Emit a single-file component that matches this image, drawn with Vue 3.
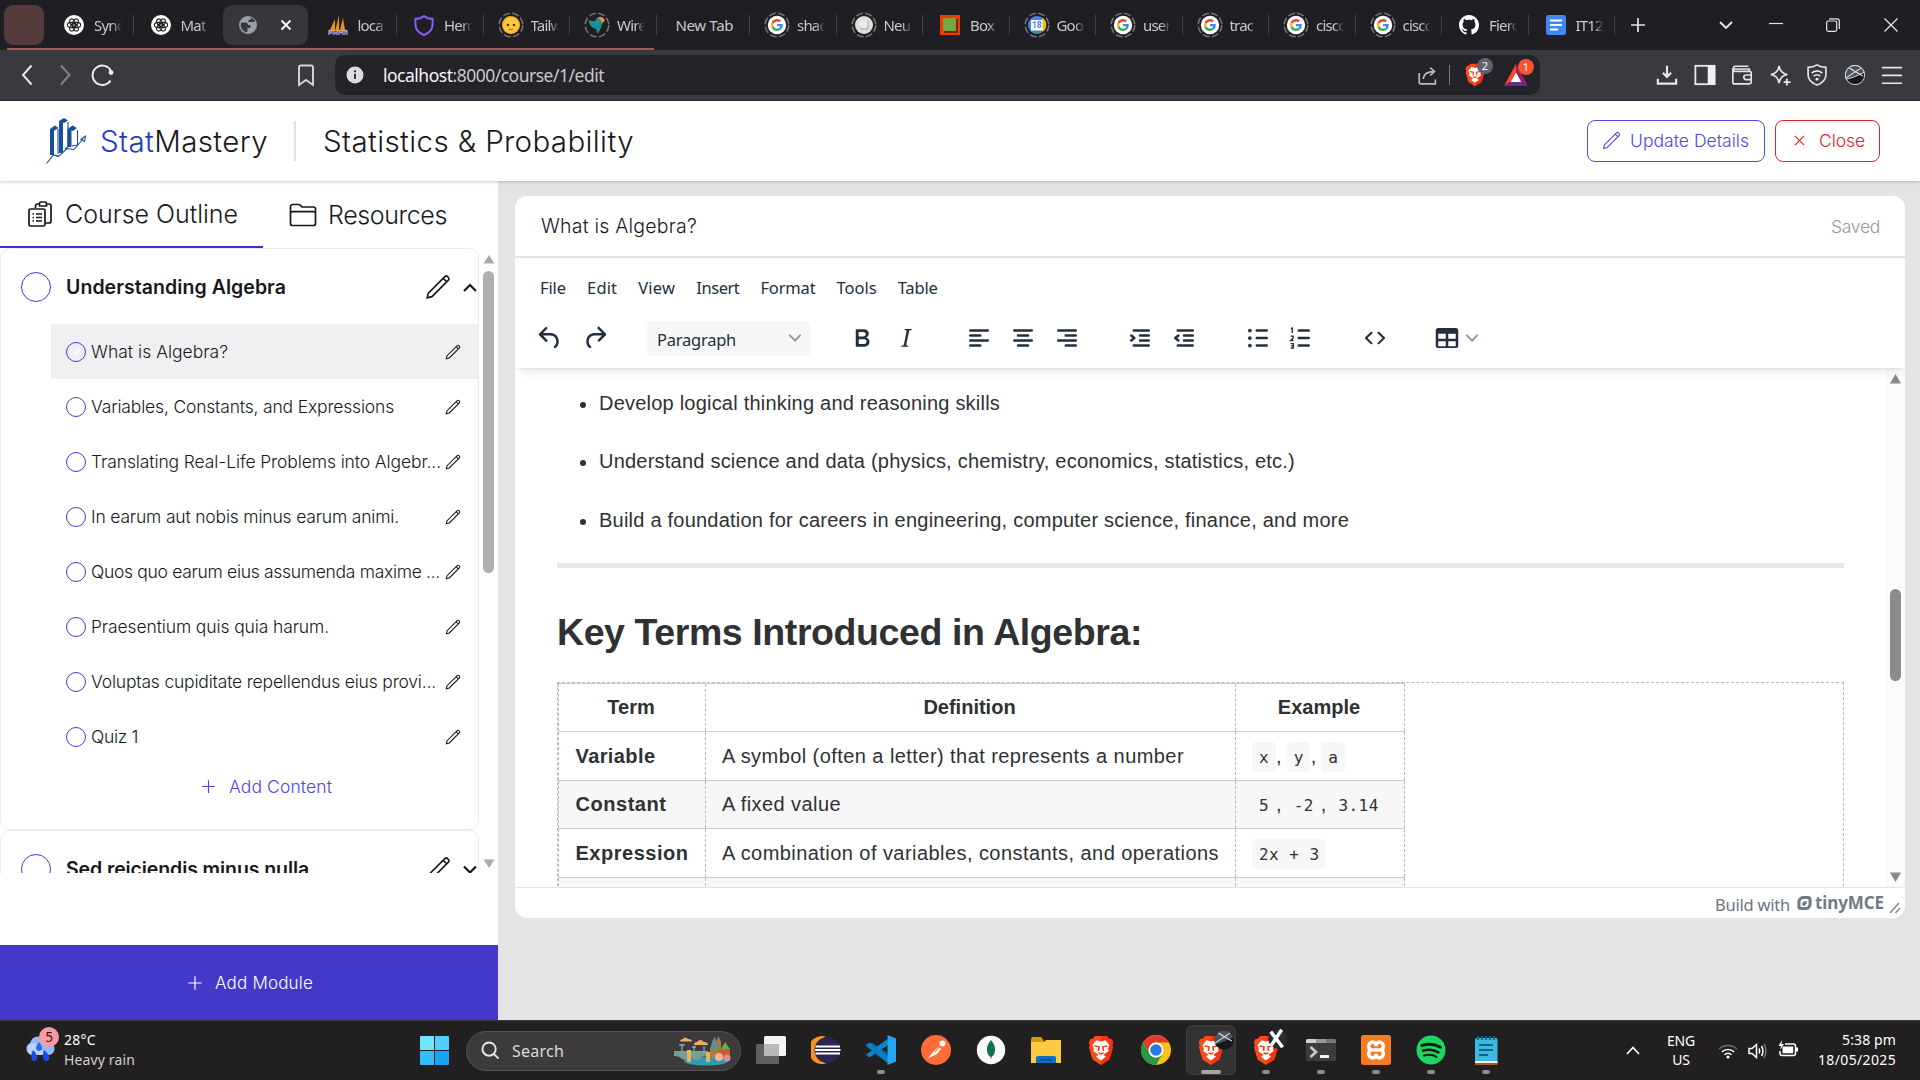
<script setup>
// Tracks a label out or in so that it fills the given width in pixels.
const vFit = {
  mounted(el, { value }) {
    const range = document.createRange()
    range.selectNodeContents(el)
    const natural = range.getBoundingClientRect().width
    const count = el.textContent.length
    if (value && count) el.style.letterSpacing = `${((value - natural) / count).toFixed(3)}px`
  },
}

const googleG =
  '<path fill="#EA4335" d="M24 9.5c3.54 0 6.71 1.22 9.21 3.6l6.85-6.85C35.9 2.38 30.47 0 24 0 14.62 0 6.51 5.38 2.56 13.22l7.98 6.19C12.43 13.72 17.74 9.5 24 9.5z"/><path fill="#4285F4" d="M46.98 24.55c0-1.57-.15-3.09-.38-4.55H24v9.02h12.94c-.58 2.96-2.26 5.48-4.78 7.18l7.73 6c4.51-4.18 7.09-10.36 7.09-17.65z"/><path fill="#FBBC05" d="M10.53 28.59c-.48-1.45-.76-2.99-.76-4.59s.27-3.14.76-4.59l-7.98-6.19C.92 16.46 0 20.12 0 24c0 3.88.92 7.54 2.56 10.78l7.97-6.19z"/><path fill="#34A853" d="M24 48c6.48 0 11.93-2.13 15.89-5.81l-7.73-6c-2.15 1.45-4.92 2.3-8.16 2.3-6.26 0-11.57-4.22-13.47-9.91l-7.98 6.19C6.51 42.62 14.62 48 24 48z"/>'
const ring = '<circle cx="15" cy="15" r="11.8" fill="none" stroke="#77777b" stroke-width="1.5" stroke-dasharray="7 2.4" />'

// Favicons, all on a 30 by 30 board
const fav = {
  gpt: '<circle cx="15" cy="15" r="10" fill="#fff"/><g fill="none" stroke="#222" stroke-width="1.1"><ellipse cx="15" cy="12.4" rx="2.6" ry="4" transform="rotate(30 15 15)"/><ellipse cx="15" cy="12.4" rx="2.6" ry="4" transform="rotate(90 15 15)"/><ellipse cx="15" cy="12.4" rx="2.6" ry="4" transform="rotate(150 15 15)"/><ellipse cx="15" cy="12.4" rx="2.6" ry="4" transform="rotate(210 15 15)"/><ellipse cx="15" cy="12.4" rx="2.6" ry="4" transform="rotate(270 15 15)"/><ellipse cx="15" cy="12.4" rx="2.6" ry="4" transform="rotate(330 15 15)"/></g>',
  globe: '<circle cx="15" cy="15" r="9" fill="#9aa0a6"/><path d="M8 12.500h4.500c1.500 0 2.500 1 2.500 2.500h2.500v3h-3v3.500l-1.500.8A8 8 0 0 1 8 12.500z" fill="#37363c"/><path d="M17.500 7.800v2.200h-2v2h5.500l1-1a8 8 0 0 0-4.500-3.200z" fill="#37363c"/>',
  pma: '<path d="M7 20 12 9v11zM12.500 20 16 5v15zM17 20l3-12 2 12z" fill="#f29111"/><path d="M6 20.500h18" stroke="#e8a33a" stroke-width="1.500"/><path d="M6 25v-4h3v2H6M11 25v-4M14 25v-4M11 23h3M16 25v-4l2 2 2-2v4M22 25v-4h2v4" fill="none" stroke="#9ea3e6" stroke-width="1.300"/>',
  shield: '<path d="M15 6c2.500 2 5.500 3 8.500 3v6c0 4.500-3 7.800-8.500 10-5.500-2.200-8.500-5.500-8.500-10V9C9.500 9 12.500 8 15 6z" fill="none" stroke="#8b5cf6" stroke-width="2"/>',
  tail: ring + '<circle cx="15" cy="15" r="9" fill="#fbb92c"/><circle cx="15" cy="15" r="7" fill="#fdcb3a"/><circle cx="12" cy="15" r="1.300" fill="#4a2b12"/><circle cx="18" cy="15" r="1.300" fill="#4a2b12"/><path d="M13 19q2 1.500 4 0" stroke="#c55" fill="none" stroke-width="1.200"/>',
  wire: ring + '<path d="M6.500 10l6 1.500L15 8c3-2.500 7-1 7.500 2.500L19.500 15c0 4-2 5-4 9l-1.500-5c-4-1-7-4-7.500-9z" fill="#1e8f93"/><path d="M15.500 8c2-2 6.500-1.500 7.500 3l-3 2c-.5-2.500-2-4-4.500-5z" fill="#f28b3a"/>',
  google: ring + '<circle cx="15" cy="15" r="9.200" fill="#fff"/><svg x="9" y="9" width="12" height="12" viewBox="0 0 48 48">' + googleG + '</svg>',
  neu: ring + '<circle cx="15" cy="15" r="9" fill="#dedede"/><rect x="11" y="11" width="9" height="9" rx="2" fill="#c4c4c4"/><rect x="10.500" y="10.500" width="7.500" height="7.500" rx="2" fill="#ebebeb"/>',
  box: '<rect x="5" y="5" width="20" height="20" fill="#f03c02"/><rect x="9" y="9" width="14" height="14" fill="#7a2a08"/><rect x="8" y="8" width="13" height="13" fill="#7aa840"/>',
  cal: ring + '<circle cx="15" cy="15" r="9" fill="#4285f4"/><path d="M20 8v13h2a9 9 0 0 0 0-12z" fill="#fbbc04"/><path d="M9 20.500h12a9 9 0 0 1-12 0z" fill="#34a853"/><rect x="9" y="10" width="11.500" height="10.500" fill="#fff"/><text x="14.800" y="18.200" font-size="8.500" font-weight="700" text-anchor="middle" fill="#4285f4" font-family="Roboto, sans-serif">18</text>',
  github: '<path transform="translate(5 5) scale(1.25)" fill="#fff" d="M8 0C3.580 0 0 3.580 0 8c0 3.540 2.290 6.530 5.470 7.590.4.070.55-.17.55-.38 0-.19-.01-.82-.01-1.490-2.010.37-2.530-.49-2.690-.94-.09-.23-.48-.94-.82-1.130-.28-.15-.68-.52-.01-.53.63-.01 1.080.58 1.230.82.72 1.210 1.870.87 2.330.66.07-.52.28-.87.51-1.070-1.780-.2-3.640-.89-3.640-3.950 0-.87.31-1.590.82-2.150-.08-.2-.36-1.020.08-2.120 0 0 .67-.21 2.200.82.64-.18 1.320-.27 2-.27s1.360.09 2 .27c1.530-1.040 2.200-.82 2.200-.82.44 1.100.16 1.920.08 2.120.51.56.82 1.270.82 2.150 0 3.070-1.870 3.750-3.650 3.950.29.25.54.73.54 1.480 0 1.070-.01 1.930-.01 2.200 0 .21.15.46.55.38A8.010 8.010 0 0 0 16 8c0-4.420-3.580-8-8-8z"/>',
  docs: '<rect x="5" y="5" width="20" height="20" rx="2.500" fill="#4285f4"/><path d="M9 10.500h12M9 15h12M9 19.500h8" stroke="#fff" stroke-width="2.200"/>',
}

const tabs = [
  { icon: 'gpt', title: 'Sync', sep: true },
  { icon: 'gpt', title: 'Mat' },
  { icon: 'globe', title: '', active: true },
  { icon: 'pma', title: 'loca', sep: true },
  { icon: 'shield', title: 'Herc', sep: true },
  { icon: 'tail', title: 'Tailw', sep: true },
  { icon: 'wire', title: 'Wire', sep: true },
  { title: 'New Tab', sep: true },
  { icon: 'google', title: 'shad', sep: true },
  { icon: 'neu', title: 'Neu', sep: true },
  { icon: 'box', title: 'Box', sep: true },
  { icon: 'cal', title: 'Goo', sep: true },
  { icon: 'google', title: 'user', sep: true },
  { icon: 'google', title: 'trac', sep: true },
  { icon: 'google', title: 'cisco', sep: true },
  { icon: 'google', title: 'cisco', sep: true },
  { icon: 'github', title: 'Fierc', sep: true },
  { icon: 'docs', title: 'IT12', sep: true },
]

const lion =
  '<path d="M9 1h12l2.500 3 2-.3 1.800 4-1 2.300.7 2.500-3.500 12L15 30l-8.500-5.500L3 12.500l.7-2.500-1-2.300 1.800-4 2 .3z" fill="#fb4a1c"/><path d="M15 1h6l2.500 3 2-.3 1.800 4-1 2.300.7 2.500-3.500 12L15 30z" fill="#f51f0a" opacity=".55"/><path d="M15 6.500l4.500-1.200L23.500 10l-1.500 4 .8 2-5.300 3.800 2.500 2-5 3.700-5-3.700 2.500-2L7.200 16l.8-2L6.500 10l4-4.700z" fill="#fff"/><path d="M8.500 11l4.500.8-.5 4.200M21.500 11l-4.500.8.5 4.200M12.500 17.800l2.500 1.100 2.500-1.100" stroke="#fb3c1a" stroke-width="1.600" fill="none"/>'

const orb =
  '<circle cx="12" cy="12" r="10.500" fill="#14161a"/><path d="M1.700 10A10.500 10.500 0 0 1 22 9C16 12 9 15.500 2.500 16.500A10.500 10.500 0 0 1 1.700 10z" fill="#4b525d"/><path d="M2.500 15 18.500 4.500M6 4.500 20.500 13" stroke="#d6dbe2" stroke-width="1.300"/>'

const tools = [
  { d: '<path d="M12 2v12M7.500 9.500l4.500 4.500 4.500-4.500M2 16v5.500h20V16" stroke-width="2.400"/>' },
  { d: '<rect x="1.500" y="2" width="21" height="20" stroke-width="2"/><rect x="15" y="2" width="8" height="20" fill="#f0f0f2" stroke="none"/>' },
  { d: '<path d="M3 5.500h17V8M3 5.500C2.500 4 3 2.500 4.500 2.500H19M2 4.500v15c0 1.200.8 2.200 2.300 2.200h16c1 0 1.700-.7 1.700-1.700V9.500C22 8.500 21.300 8 20.500 8H4.500C3 8 2 7 2 5M22 12h-5.500a2.500 2.500 0 0 0 0 5H22" stroke-width="1.800"/>' },
  { d: '<path d="M11 2c.8 5.500 3 8.500 9 9.500-6 1-8.200 4-9 9.500-.8-5.500-3-8.500-9-9.500 6-1 8.200-4 9-9.500z" stroke-width="1.800"/><path d="M19.500 16v7.500M16 19.800h7.500" stroke-width="2"/>' },
  { d: '<path d="M12 1c3 2 6.500 2.700 9.700 2.700V12c0 5-4 8.800-9.700 11-5.700-2.200-9.700-6-9.700-11V3.700C5.500 3.700 9 3 12 1z" stroke-width="1.800"/><path d="M6.200 10a8 8 0 0 1 11.600 0M8.500 13.200a5 5 0 0 1 7 0" stroke-width="1.900"/><circle cx="12" cy="16.500" r="1.600" fill="#f0f0f2" stroke="none"/>' },
  { d: orb },
  { d: '<path d="M1 4h22M1 12.500h22M1 21h22" stroke-width="1.900"/>' },
]

const pencil =
  '<path d="M2 22l1.100-4.400L18.300 2.400a1.800 1.800 0 0 1 2.500 0l.8.8a1.800 1.800 0 0 1 0 2.500L6.400 20.900zM16.800 4l3.200 3.200" />'
const plus = '<path d="M10 1.500v17M1.500 10h17"/>'

const lessons = [
  { title: 'What is Algebra?', w: 137, active: true },
  { title: 'Variables, Constants, and Expressions', w: 303 },
  { title: 'Translating Real-Life Problems into Algebr...', w: 350 },
  { title: 'In earum aut nobis minus earum animi.', w: 308 },
  { title: 'Quos quo earum eius assumenda maxime ...', w: 349 },
  { title: 'Praesentium quis quia harum.', w: 238 },
  { title: 'Voluptas cupiditate repellendus eius provi...', w: 345 },
  { title: 'Quiz 1', w: 47 },
]

const menus = [
  ['File', 26], ['Edit', 30], ['View', 37], ['Insert', 43], ['Format', 55], ['Tools', 40], ['Table', 40],
]

const ed = {
  undo: '<path d="M6.400 8H12c3.700 0 6.200 2 6.800 5.100.6 2.700-.4 5.600-2.300 6.800a1 1 0 0 1-1-1.800c1.100-.6 1.800-2.700 1.400-4.600-.5-2.100-2.100-3.500-4.900-3.500H6.400l3.300 3.300a1 1 0 1 1-1.400 1.400l-5-5a1 1 0 0 1 0-1.400l5-5a1 1 0 0 1 1.400 1.400L6.400 8Z"/>',
  redo: '<path d="M17.600 10H12c-2.800 0-4.400 1.400-4.900 3.500-.4 2 .3 4 1.400 4.600a1 1 0 1 1-1 1.800c-2-1.200-2.900-4.100-2.300-6.800.6-3 3-5.100 6.800-5.100h5.600l-3.300-3.300a1 1 0 1 1 1.400-1.400l5 5a1 1 0 0 1 0 1.400l-5 5a1 1 0 0 1-1.400-1.400l3.300-3.300Z"/>',
  bold: '<path d="M7.800 19c-.3 0-.5 0-.6-.2l-.2-.5V5.700c0-.2 0-.4.2-.5l.6-.2h5c1.500 0 2.700.3 3.500 1 .7.600 1.100 1.400 1.100 2.500a3 3 0 0 1-.6 1.900c-.4.600-1 1-1.600 1.200.4.100.9.300 1.300.6s.8.700 1 1.200c.4.400.5 1 .5 1.600 0 1.300-.4 2.300-1.300 3-.8.700-2.100 1-3.800 1H7.800Zm5-8.300c.6 0 1.200-.1 1.600-.5.4-.3.600-.7.600-1.300 0-1.100-.8-1.700-2.300-1.700H9.300v3.500h3.400Zm.5 6c.7 0 1.300-.1 1.700-.4.4-.4.600-.9.600-1.500s-.2-1-.7-1.400c-.4-.3-1-.4-2-.4H9.400v3.800h4Z"/>',
  italic: '<path d="m16.700 4.700-.1.900h-.3c-.6 0-1 0-1.400.3-.3.300-.4.600-.5 1.100l-2.100 9.800v.6c0 .5.400.8 1.400.8h.2l-.2.800H8l.2-.8h.2c1.100 0 1.800-.5 2-1.500l2-9.800.1-.5c0-.6-.4-.8-1.400-.8h-.3l.2-.9h5.800Z"/>',
  left: '<path class="ln" d="M5 6h14M5 10h8M5 14h14M5 18h8"/>',
  center: '<path class="ln" d="M5 6h14M8 10h8M5 14h14M8 18h8"/>',
  right: '<path class="ln" d="M5 6h14M11 10h8M5 14h14M11 18h8"/>',
  indent: '<path class="ln" d="M7 6h12M12 10h7M12 14h7M7 18h12M5 10l2.500 2L5 14"/>',
  outdent: '<path class="ln" d="M7 6h12M12 10h7M12 14h7M7 18h12M7.500 10L5 12l2.500 2"/>',
  bullets: '<path class="ln" d="M11 6h8M11 12h8M11 18h8"/><circle cx="5.500" cy="6" r="1.500"/><circle cx="5.500" cy="12" r="1.500"/><circle cx="5.500" cy="18" r="1.500"/>',
  numbers: '<path class="ln" d="M11 6h8M11 12h8M11 18h8"/><path class="th" d="M4.800 4.500l1-.5v4M4.500 10.500h2v1.500l-2 2h2.300M4.500 16.500h2.200v3.500H4.500M5 18.200h1.700"/>',
  code: '<path d="M9.800 15.700c.3.300.3.800 0 1-.3.400-.9.400-1.200 0l-4.400-4.100a.8.800 0 0 1 0-1.200l4.400-4.200c.3-.3.900-.3 1.200 0 .3.300.3.800 0 1.100L6 12l3.800 3.700ZM14.200 15.700c-.3.300-.3.800 0 1 .4.400.9.400 1.200 0l4.400-4.100c.3-.3.300-.9 0-1.200l-4.400-4.200a.8.800 0 0 0-1.200 0c-.3.300-.3.800 0 1.100L18 12l-3.800 3.700Z"/>',
  table: '<path fill-rule="evenodd" d="M19 4a2 2 0 0 1 2 2v12a2 2 0 0 1-2 2H5a2 2 0 0 1-2-2V6c0-1.100.9-2 2-2h14ZM5 14.500v4h6v-4H5Zm14 0h-6v4h6v-4Zm0-6h-6v4h6v-4ZM5 12.500h6v-4H5v4Z"/>',
}
const chevron =
  '<path d="M8.700 2.200c.3-.3.800-.3 1 0 .4.400.4.900 0 1.200L5.700 7.800c-.3.300-.9.300-1.200 0L.2 3.400a.8.800 0 0 1 0-1.200c.3-.3.800-.3 1.100 0L5 6l3.700-3.800Z"/>'
const toolGroups = [
  ['bold', 'italic'],
  ['left', 'center', 'right'],
  ['indent', 'outdent'],
  ['bullets', 'numbers'],
  ['code'],
  ['table'],
]

const bullets = [
  ['Develop logical thinking and reasoning skills', 401],
  ['Understand science and data (physics, chemistry, economics, statistics, etc.)', 696],
  ['Build a foundation for careers in engineering, computer science, finance, and more', 750],
]
const rows = [
  { term: 'Variable', tw: 80, def: 'A symbol (often a letter) that represents a number', dw: 462, ex: ['x', 'y', 'a'] },
  { term: 'Constant', tw: 91, def: 'A fixed value', dw: 119, ex: ['5', '-2', '3.14'] },
  { term: 'Expression', tw: 113, def: 'A combination of variables, constants, and operations', dw: 497, ex: ['2x + 3'] },
]

// Taskbar icons on a 30 by 30 board
const apps = [
  { d: '<rect x="8" y="1" width="22" height="20" rx="1.500" fill="#f4f4f4"/><rect x="0" y="9" width="23" height="20" rx="1.500" fill="#777" opacity=".75"/><rect x="8" y="9" width="15" height="12" fill="#b9b9b9"/>' },
  { d: '<path d="M15 1.500A14 14 0 1 0 15 28.500 15 15 0 0 1 15 1.500z" fill="#f7941e"/><circle cx="16.500" cy="15" r="13" fill="#2c2255"/><path d="M4.500 11.500h24.500M4 15h25.500M4.500 18.500h24.500" stroke="#fff" stroke-width="2"/>' },
  { d: '<path d="M3 10.500 21.500 26v-8L5.500 7.500 0 10.800z" fill="#0065a9"/><path d="M21.500 4 0 19.800 3.500 22.500 22 10z" fill="#0a86cf"/><path d="M3.500 7.500 22 21v7.500L0 11l1-2z" fill="#0d7cc4"/><path d="M21.500 0 30 3.500v23L21.500 30z" fill="#25a6f0"/>', dot: true },
  { d: '<circle cx="15" cy="15" r="15" fill="#ff6c37"/><path d="M7 23l6-7 5-4 2 2-4 5-6 3z" fill="#fff"/><circle cx="21.500" cy="8.500" r="3" fill="#fff"/><path d="M14 17l6-6" stroke="#ff6c37" stroke-width="1"/>' },
  { d: '<circle cx="15" cy="15" r="14.200" fill="#fafafa"/><path d="M15 5c3.500 4 4.500 7.500 4 11-.4 3-2 5-3.500 6l-.5 3-.5-3c-1.500-1-3.100-3-3.500-6-.5-3.500.5-7 4-11z" fill="#13714b"/>' },
  { d: '<path d="M0 4a2 2 0 0 1 2-2h8l3 4v4H0z" fill="#d79a05"/><path d="M0 7h13l2-2h15v23H0z" fill="#fdcc42"/><path d="M5 28v-5a2 2 0 0 1 2-2h16a2 2 0 0 1 2 2v5z" fill="#0c71c6"/><path d="M9 24.800h12" stroke="#073f7a" stroke-width="1.300"/>' },
  { d: lion },
  { d: '<circle cx="15" cy="15" r="15" fill="#fbc116"/><path d="M2 7.500A15 15 0 0 1 28 7.500H15a7.500 7.500 0 0 0-6.500 11.200z" fill="#e33b2e"/><path d="M2 7.500 8.500 18.700A7.500 7.500 0 0 0 21.500 18.700L15 30A15 15 0 0 1 2 7.500z" fill="#279847"/><circle cx="15" cy="15" r="7.400" fill="#fff"/><circle cx="15" cy="15" r="5.800" fill="#2a79e8"/>' },
  { d: lion, orb: orb, active: true },
  { d: lion, orb: '<circle cx="12" cy="12" r="10.500" fill="#262b34"/><path d="M4 4l13 17M16 2 4 20" stroke="#fff" stroke-width="3.800"/>', dot: true },
  { d: '<rect x="0" y="4" width="30" height="22" rx="1.500" fill="#3d3d3d"/><path d="M0 8V5.500A1.500 1.500 0 0 1 1.500 4H10v4z" fill="#d0d0d0"/><path d="M10 4h10v4H10z" fill="#999"/><path d="M20 4h8.500A1.500 1.500 0 0 1 30 5.500V8H20z" fill="#777"/><path d="M4.500 12l5.500 5-5.500 5" stroke="#c9c9c9" stroke-width="2.800" fill="none"/><path d="M14 21.500h9" stroke="#fff" stroke-width="2.800"/>', dot: true },
  { d: '<rect width="30" height="30" rx="2.500" fill="#f47b20"/><path d="M10 7.500a3.500 3.500 0 0 1 5 3.500 3.500 3.500 0 0 1 5-3.500c3 1.500 3 6 .5 7.500 2.500 1.500 2.500 6-.5 7.500a3.500 3.500 0 0 1-5-3.500 3.500 3.500 0 0 1-5 3.500c-3-1.500-3-6-.5-7.500-2.500-1.500-2.500-6 .5-7.500zM9.500 15h11" fill="none" stroke="#fff" stroke-width="3.500"/>', dot: true },
  { d: '<circle cx="15" cy="15" r="14.500" fill="#1ed760"/><g fill="none" stroke="#191919" stroke-linecap="round"><path d="M6 10.500c6-2 13-1.500 18.500 1.700" stroke-width="3"/><path d="M7 15.700c5-1.600 11-1 15.500 1.700" stroke-width="2.500"/><path d="M8 20.500c4.500-1.300 9-.8 12.500 1.400" stroke-width="2.100"/></g>', dot: true },
  { d: '<rect x="4" y="3" width="22.500" height="27" rx="1.500" fill="#3eb8e0"/><path d="M4 26h22.500v2H4z" fill="#eee"/><path d="M4 28h22.500v.5a1.500 1.500 0 0 1-1.500 1.500H5.500A1.500 1.500 0 0 1 4 28.500z" fill="#b45a14"/><path d="M7 1v4M11 1v4M15 1v4M19 1v4M23 1v4" stroke="#14628a" stroke-width="2"/><path d="M8 10h14M8 15h14M8 20h9" stroke="#0f6288" stroke-width="2"/>', dot: true },
]
</script>

<template>
  <div class="screen">
    <header class="tabstrip">
      <div class="group-chip"></div>
      <div class="tabs">
        <div v-for="(t, i) in tabs" :key="i" class="tab" :class="{ active: t.active, sep: t.sep, bare: !t.icon }">
          <svg v-if="t.icon" class="fav" viewBox="0 0 30 30" v-html="fav[t.icon]"></svg>
          <span v-if="t.title" class="tab-title" :class="{ full: !t.icon }">{{ t.title }}</span>
          <svg v-if="t.active" class="tab-x" viewBox="0 0 12 12"><path d="M1.500 1.500l9 9M10.500 1.500l-9 9" /></svg>
        </div>
      </div>
      <svg class="newtab" viewBox="0 0 14 14"><path d="M7 0v14M0 7h14" /></svg>
      <div class="window-controls">
        <svg class="wc bold" viewBox="0 0 14 14"><path d="M1 4l6 6 6-6" /></svg>
        <svg class="wc" viewBox="0 0 14 14"><path d="M0 5.500h14" /></svg>
        <svg class="wc" viewBox="0 0 14 14"><rect x=".7" y="3" width="10" height="10.300" rx="1.500" /><path d="M3 .8h8a2.300 2.300 0 0 1 2.300 2.300V11" /></svg>
        <svg class="wc" viewBox="0 0 14 14"><path d="M.5.5l13 13M13.500.5l-13 13" /></svg>
      </div>
      <div class="group-line"></div>
    </header>

    <nav class="navbar">
      <svg class="nav-ic back" viewBox="0 0 24 24"><path d="M16.500 2.500 8 12l8.500 9.500" /></svg>
      <svg class="nav-ic fwd" viewBox="0 0 24 24"><path d="M8 2.500l8.500 9.500L8 21.500" /></svg>
      <svg class="nav-ic reload" viewBox="0 0 24 24"><path d="M20.500 17.500A9.700 9.700 0 1 1 21 8" /><circle cx="21" cy="9.500" r="2.400" fill="#eee" stroke="none" /></svg>
      <svg class="nav-ic mark" viewBox="0 0 24 24"><path d="M5 4.500C5 3.400 5.700 2.500 7 2.500h10c1.300 0 2 .9 2 2V22l-7-5-7 5z" /></svg>
      <div class="url">
        <svg class="info" viewBox="0 0 18 18"><circle cx="9" cy="9" r="8.500" fill="#dcdce1" /><path d="M9 7.800V13" stroke="#242329" stroke-width="1.800" /><circle cx="9" cy="5.300" r="1.100" fill="#242329" /></svg>
        <span class="address" v-fit="221"><b>localhost</b>:8000/course/1/edit</span>
        <svg class="share" viewBox="0 0 24 24"><path d="M2.500 9v10.500c0 1 .8 2 2 2H21v-5M7 16c.5-6 4-8.500 12.500-8.500M15 3l5 4.500-5 4.500" /></svg>
        <i class="url-sep"></i>
        <div class="badge-wrap">
          <svg viewBox="0 0 30 31" width="24" height="24" v-html="lion"></svg>
          <span class="badge gray">2</span>
        </div>
        <div class="badge-wrap bat">
          <svg viewBox="0 0 24 22" width="24" height="22"><path d="M12 0 0 22 12 14z" fill="#ff4724" /><path d="M12 0l12 22-12-8z" fill="#9e1f63" /><path d="M0 22h24l-12-8z" fill="#662d91" /><path d="M12 8.500 6.800 18h10.400z" fill="#fff" /></svg>
          <span class="badge red">1</span>
        </div>
      </div>
      <div class="nav-tools">
        <svg v-for="(t, i) in tools" :key="i" viewBox="0 0 24 24" v-html="t.d"></svg>
      </div>
    </nav>

    <section class="page">
      <header class="app-head">
        <svg class="logo" viewBox="0 0 40 46">
          <path d="M6 11v26M15 3v32M23.500 11v18" stroke="#1b4f9c" stroke-width="4" />
          <path d="M12 11v25M22 4v25M31.500 12v15M9.500 37l3 1.500M19 31l4-3M26 28l5.500-1" stroke="#1b4f9c" stroke-width="1.100" fill="none" />
          <path d="M4 11l5-3.500 3.500 2.500-4 2.500zM13 3l5-3 4 2.500-4 2.500zM21.500 11l5-3.500 4.500 2.500-4 3z" fill="#1b4f9c" />
          <path d="M.5 45.500 7.500 37l5 1.500 8.500-8 7 1L37 21M35 21.500l4.500-3.500-1 5.500z" fill="none" stroke="#1b4f9c" stroke-width="1.100" />
        </svg>
        <span class="brand" v-fit="168"><em>Stat</em>Mastery</span>
        <i class="head-line"></i>
        <span class="course" v-fit="311">Statistics &amp; Probability</span>
        <button class="btn update">
          <svg viewBox="0 0 24 24" v-html="pencil"></svg>
          <span v-fit="119">Update Details</span>
        </button>
        <button class="btn close">
          <svg viewBox="0 0 12 12"><path d="M1 1l10 10M11 1 1 11" /></svg>
          <span v-fit="46">Close</span>
        </button>
      </header>

      <div class="body">
        <aside class="side">
          <div class="side-tabs">
            <div class="side-tab on">
              <svg viewBox="0 0 24 26"><path d="M7.500 7V5a2 2 0 0 1 2-2H11M19 3h2a2 2 0 0 1 2 2v15a2 2 0 0 1-2 2h-4M11.500 2.500a1.500 1.500 0 0 1 1.500-1.500h4a1.500 1.500 0 0 1 1.500 1.500V5h-7z" /><rect x="1" y="8" width="16" height="17" rx="1.500" /><path d="M4.500 13h1.500M8 13h6M4.500 16.500h1.500M8 16.500h6M4.500 20h1.500M8 20h6" /></svg>
              <span v-fit="173">Course Outline</span>
            </div>
            <div class="side-tab res">
              <svg viewBox="0 0 28 24"><path d="M1.500 20V3.500a2 2 0 0 1 2-2h6.300c.8 0 1.300.3 1.700.9L13 4h11.500a2 2 0 0 1 2 2v14.500a2 2 0 0 1-2 2h-21a2 2 0 0 1-2-2V10.500a1.800 1.800 0 0 1 2-1.800h21a1.800 1.800 0 0 1 2 1.800" /></svg>
              <span v-fit="119">Resources</span>
            </div>
          </div>

          <div class="outline">
            <div class="modules">
              <div class="module">
                <div class="module-head">
                  <i class="ring big"></i>
                  <span class="module-title" v-fit="220">Understanding Algebra</span>
                  <svg class="pen-lg" viewBox="0 0 24 24" v-html="pencil"></svg>
                  <svg class="caret" viewBox="0 0 14 9"><path d="M1 8l6-6 6 6" /></svg>
                </div>
                <div v-for="l in lessons" :key="l.title" class="lesson" :class="{ on: l.active }">
                  <i class="ring"><svg v-if="l.active" viewBox="0 0 12 12"><path d="M3 6.500l2 2 4-5" /></svg></i>
                  <span class="lesson-title" v-fit="l.w">{{ l.title }}</span>
                  <svg class="pen-sm" viewBox="0 0 24 24" v-html="pencil"></svg>
                </div>
                <div class="add-content">
                  <svg viewBox="0 0 20 20" v-html="plus"></svg>
                  <span v-fit="103">Add Content</span>
                </div>
              </div>
              <div class="module">
                <div class="module-head">
                  <i class="ring big"></i>
                  <span class="module-title" v-fit="243">Sed reiciendis minus nulla</span>
                  <svg class="pen-lg" viewBox="0 0 24 24" v-html="pencil"></svg>
                  <svg class="caret" viewBox="0 0 14 9"><path d="M1 1.500l6 6 6-6" /></svg>
                </div>
              </div>
            </div>
            <div class="side-scroll">
              <svg viewBox="0 0 12 9"><path d="M6 0l5.500 8.500H.5z" /></svg>
              <i></i>
              <svg class="down" viewBox="0 0 12 9"><path d="M6 9 .5.500h11z" /></svg>
            </div>
          </div>

          <button class="add-module">
            <svg viewBox="0 0 20 20" v-html="plus"></svg>
            <span v-fit="98">Add Module</span>
          </button>
        </aside>

        <main class="editor">
          <div class="ed-title">
            <span v-fit="156">What is Algebra?</span>
            <small v-fit="49">Saved</small>
          </div>
          <div class="ed-top">
            <div class="menubar">
              <span v-for="m in menus" :key="m[0]" class="menu" v-fit="m[1]">{{ m[0] }}</span>
            </div>
            <div class="toolbar">
              <div class="tg first">
                <svg viewBox="0 0 24 24" v-html="ed.undo"></svg>
                <svg viewBox="0 0 24 24" v-html="ed.redo"></svg>
              </div>
              <div class="select">
                <span v-fit="79">Paragraph</span>
                <svg viewBox="0 0 10 10" v-html="chevron"></svg>
              </div>
              <div v-for="g in toolGroups" :key="g[0]" class="tg" :class="g[0]">
                <svg v-for="n in g" :key="n" viewBox="0 0 24 24" v-html="ed[n]"></svg>
                <svg v-if="g[0] === 'table'" class="chev" viewBox="0 0 10 10" v-html="chevron"></svg>
              </div>
            </div>
          </div>
          <div class="ed-area">
            <div class="doc">
              <ul>
                <li v-for="b in bullets" :key="b[0]"><span v-fit="b[1]">{{ b[0] }}</span></li>
              </ul>
              <div class="rule"></div>
              <h2><span v-fit="585">Key Terms Introduced in Algebra:</span></h2>
              <div class="sheet">
                <div class="tr th-row">
                  <div class="td c1">Term</div>
                  <div class="td c2">Definition</div>
                  <div class="td c3">Example</div>
                </div>
                <div v-for="r in rows" :key="r.term" class="tr">
                  <div class="td c1"><span v-fit="r.tw">{{ r.term }}</span></div>
                  <div class="td c2"><span v-fit="r.dw">{{ r.def }}</span></div>
                  <div class="td c3">
                    <template v-for="(e, i) in r.ex" :key="e"><code>{{ e }}</code><span v-if="i < r.ex.length - 1" class="comma">,</span></template>
                  </div>
                </div>
                <div class="tr">
                  <div class="td c1"></div>
                  <div class="td c2"></div>
                  <div class="td c3"></div>
                </div>
              </div>
            </div>
            <div class="ed-scroll">
              <svg viewBox="0 0 12 10"><path d="M6 0l5.500 9.500H.5z" /></svg>
              <i></i>
              <svg class="down" viewBox="0 0 12 10"><path d="M6 10 .5.500h11z" /></svg>
            </div>
          </div>
          <footer class="ed-foot">
            <span class="built" v-fit="75">Build with</span>
            <svg class="tiny" viewBox="0 0 18 18"><path fill-rule="evenodd" d="M7 1h6a4 4 0 0 1 4 4v5a7 7 0 0 1-6 7H5a4 4 0 0 1-4-4V8a7 7 0 0 1 6-7zm0 3.500A3 3 0 0 0 4.500 7v5.500a1 1 0 0 0 1 1H11a3 3 0 0 0 2.500-2.500V5.500a1 1 0 0 0-1-1zM8 7h3.500v3.500H10V12H6.500V8.500H8z" /></svg>
            <span class="tiny-name" v-fit="69">tinyMCE</span>
            <svg class="grip" viewBox="0 0 12 12"><path d="M1 11 10 1M6.500 11 11 6" /></svg>
          </footer>
        </main>
      </div>
    </section>

    <footer class="taskbar">
      <div class="weather">
        <svg viewBox="0 0 32 30" width="32" height="30"><path d="M7 19a6.500 6.500 0 0 1-1-12 9 9 0 0 1 17-1 6.500 6.500 0 0 1 2 13z" fill="#8fbcf8" /><path d="M7 19a6.500 6.500 0 0 1-1-11c4-2 8 0 9 4l9 7z" fill="#b7d3fb" /><path d="M15 6c4 5 4 8 0 9-4-1-4-4 0-9z" fill="#2b66e6" /><path d="M9 14c5 5 6 10 2 11s-5-5-2-11zM20 14c6 5 7 10 3 11s-5-5-3-11z" fill="#1c4be0" /></svg>
        <span class="w-badge">5</span>
        <div class="w-text">
          <span class="w1" v-fit="32">28°C</span>
          <span class="w2" v-fit="71">Heavy rain</span>
        </div>
      </div>
      <svg class="win" viewBox="0 0 29 29"><path d="M0 1a1 1 0 0 1 1-1h13v14H0z" fill="#6fe6fd" /><path d="M15 0h13a1 1 0 0 1 1 1v13H15z" fill="#4dd0fb" /><path d="M0 15h14v14H1a1 1 0 0 1-1-1z" fill="#35bdf8" /><path d="M15 15h14v13a1 1 0 0 1-1 1H15z" fill="#1aa2f5" /></svg>
      <div class="search">
        <svg class="mag" viewBox="0 0 20 20"><circle cx="8.500" cy="8.500" r="7" /><path d="M13.500 13.500l5 5" /></svg>
        <span v-fit="52">Search</span>
        <svg class="city" viewBox="0 0 58 30">
          <ellipse cx="33" cy="25" rx="22" ry="4.500" fill="#2a9db0" />
          <path d="M1 15h34v5q-6-1-8 4h-6q-3-5-6-2t-6 1q-3-3-8-3z" fill="#7f9a93" />
          <path d="M1 16h33" stroke="#56b58a" stroke-width="1.500" />
          <path d="M14 14h4v12h-4zM33 16h4v10h-4z" fill="#e7b15c" />
          <path d="M37 13h6V6l2.500-6L48 6v7h8v9H37z" fill="#b0793f" />
          <path d="M37 13l2-7 2.500-5.500L44 6l2 7z" fill="#5f9186" />
          <path d="M48 13l4-7 5 7z" fill="#6bb04a" />
          <rect x="46" y="13" width="11" height="8" fill="#cc5a34" />
          <circle cx="46" cy="21" r="4" fill="#f0b79a" /><circle cx="54" cy="22" r="3.500" fill="#d9908f" />
          <path d="M7 5.500q0-2.500 3-2.500 2-3 5 0 4 0 4 2.500zM21 9q0-3 3-3 3-4 7 0 4 0 4 3z" fill="#edae62" />
          <path d="M9 8v8M21 10v6M31 10v6M6 9h6M19 11h4" stroke="#8ea6b0" stroke-width="1.300" />
        </svg>
      </div>
      <div class="apps">
        <div v-for="(a, i) in apps" :key="i" class="app" :class="{ active: a.active }">
          <svg viewBox="0 0 30 30" width="30" height="30" v-html="a.d"></svg>
          <svg v-if="a.orb" class="orb" viewBox="0 0 24 24" v-html="a.orb"></svg>
          <i v-if="a.dot || a.active" class="dot"></i>
        </div>
      </div>
      <svg class="tray-up" viewBox="0 0 14 9"><path d="M1 8l6-6.500L13 8" /></svg>
      <div class="lang"><span>ENG</span><span>US</span></div>
      <svg class="wifi" viewBox="0 0 20 16"><path d="M1 6a13 13 0 0 1 18 0" opacity=".35" /><path d="M3.800 9a9 9 0 0 1 12.400 0M6.500 11.800a5 5 0 0 1 7 0" /><circle cx="10" cy="14" r="1.600" fill="#fff" stroke="none" /></svg>
      <svg class="vol" viewBox="0 0 20 16"><path d="M1 5.500h3L8.500 1.500v13L4 10.500H1z" /><path d="M11 5.500q1.500 2.500 0 5M13.500 3q3 5 0 10" /><path d="M16 1q4 7 0 14" opacity=".4" /></svg>
      <svg class="bat-ic" viewBox="0 0 20 18"><path d="M7 4h8.500a2 2 0 0 1 2 2v7.500a2 2 0 0 1-2 2H4a2 2 0 0 1-2-2V11" /><rect x="4.500" y="6.500" width="10.700" height="6.800" fill="#fff" stroke="none" /><path d="M19 7.500v4" stroke-width="2" /><path d="M4 0 .5 6H3L2 10l4-6H3.500z" fill="#fff" stroke="none" /></svg>
      <div class="clock"><span v-fit="54">5:38 pm</span><span v-fit="78">18/05/2025</span></div>
    </footer>
  </div>
</template>

<style>
body { margin: 0; overflow: hidden; }
</style>

<style scoped>
* { box-sizing: border-box; }
.screen {
  --seg: "Noto Sans", "Open Sans", sans-serif;
  --ui: Inter, sans-serif;
  width: 1920px; height: 1080px; display: flex; flex-direction: column; overflow: hidden;
  font-family: var(--ui);
}
svg { display: block; flex: none; }
span { white-space: nowrap; flex: none; }
button { border: 0; padding: 0; margin: 0; background: none; font: inherit; }

/* Browser tabs */
.tabstrip { height: 50px; flex: none; background: #1f1e23; display: flex; align-items: center; padding-left: 4px; position: relative; }
.group-chip { width: 40px; height: 40px; border-radius: 9px; background: #553b3b; margin-right: 3px; flex: none; }
.tabs { width: 1568px; display: flex; flex: none; }
.tab { flex: 1 1 0; min-width: 0; height: 50px; display: flex; align-items: center; padding-left: 12px; position: relative; }
.tab.bare { padding-left: 19px; }
.tab.sep { background: linear-gradient(#424146, #424146) no-repeat right 15px / 1px 20px; }
.tab.active { height: 40px; margin: 5px 3px; border-radius: 9px; background: #37363c; padding-left: 10px; flex-basis: -6px; }
.fav { width: 30px; height: 30px; }
.tab-title { margin-left: 5px; width: 28px; font: 15px/22px var(--seg); letter-spacing: -0.8px; color: #c9c9cc; mask-image: linear-gradient(90deg, #000 65%, transparent); }
.tab-title.full { margin: 0; width: auto; mask-image: none; letter-spacing: -0.35px; }
.tab-x { width: 12px; height: 12px; margin-left: 17px; stroke: #fff; stroke-width: 1.8; fill: none; }
.newtab { width: 14px; height: 14px; margin-left: 16px; stroke: #e4e4e6; stroke-width: 1.7; }
.window-controls { margin-left: auto; display: flex; align-items: center; padding-right: 22px; }
.wc { width: 14px; height: 14px; fill: none; stroke: #e8e8ea; stroke-width: 1.2; margin-left: 43px; }
.wc.bold { stroke-width: 1.9; margin-left: 0; margin-right: -7px; }
.wc:last-child { margin-left: 44px; }
.group-line { position: absolute; left: 7px; bottom: 0; width: 647px; height: 2px; background: #a45a5b; }

/* Navigation bar */
.navbar { height: 51px; flex: none; background: #3a393f; border-bottom: 1px solid #2b2a2f; display: flex; align-items: center; padding-left: 15px; }
.nav-ic { width: 24px; height: 24px; fill: none; stroke: #eee; stroke-width: 1.9; }
.fwd { margin-left: 14px; stroke: #85848a; }
.reload { margin-left: 13px; stroke-width: 2; }
.mark { margin-left: 180px; stroke: #d8d8dc; }
.url { width: 1205px; height: 40px; margin-left: 17px; border-radius: 10px; background: #242329; display: flex; align-items: center; padding-left: 11px; flex: none; }
.info { width: 18px; height: 18px; }
.address { margin-left: 19px; font: 17.5px/26px var(--seg); color: #c8c8cc; }
.address b { font-weight: 400; color: #f4f4f6; }
.share { width: 21px; height: 21px; margin-left: auto; fill: none; stroke: #b9b9bd; stroke-width: 1.9; }
.url-sep { width: 1px; height: 20px; background: #78777c; margin: 0 13px 0 11px; }
.badge-wrap { position: relative; width: 24px; margin-right: 17px; }
.badge-wrap.bat { margin-right: 12px; }
.badge { position: absolute; left: 14px; top: -5px; width: 16px; height: 16px; border-radius: 8px; text-align: center; font: 11px/16px var(--seg); color: #fff; }
.badge.gray { background: #5f6272; left: 14px; }
.badge.red { background: #fb5330; }
.nav-tools { margin-left: 116px; display: flex; gap: 15.5px; }
.nav-tools svg { width: 22px; height: 24px; fill: none; stroke: #e6e6e9; }

/* Page */
.page { flex: 1; min-height: 0; background: #e4e4e6; display: flex; flex-direction: column; color: #18181b; font-weight: 350; }
.app-head { height: 80px; flex: none; background: #fff; display: flex; align-items: center; padding: 0 40px 0 46px; box-shadow: 0 1px 3px rgba(0, 0, 0, .22); position: relative; z-index: 1; }
.logo { width: 40px; height: 46px; }
.brand { margin-left: 14px; font-size: 29.500px; line-height: 40px; }
.brand em { font-style: normal; color: #2338c5; }
.head-line { width: 2px; height: 40px; background: #e2e2e4; margin: 0 27px 0 26px; }
.course { font-size: 29.5px; line-height: 40px; }
.btn { height: 42px; border: 1px solid; border-radius: 8px; display: flex; align-items: center; font-size: 17.5px; padding-bottom: 1px; }
.btn svg { fill: none; stroke: currentColor; }
.update { width: 178px; margin-left: auto; color: #4f46e5; padding-left: 14px; }
.update svg { width: 19px; height: 19px; margin-right: 9px; stroke-width: 1.4; }
.close { width: 105px; margin-left: 10px; color: #dc2626; padding-left: 18px; }
.close svg { width: 11px; height: 11px; margin-right: 14px; stroke-width: 1.2; }

.body { flex: 1; min-height: 0; display: flex; }
.side { width: 498px; flex: none; background: #fff; display: flex; flex-direction: column; }
.side-tabs { height: 67px; display: flex; flex: none; }
.side-tab { display: flex; align-items: center; font-size: 25px; line-height: 32px; padding-top: 1px; }
.side-tab svg { fill: none; stroke: #18181b; stroke-width: 1.7; }
.side-tab.on { width: 263px; padding-left: 28px; border-bottom: 2px solid #4329d8; }
.side-tab.on svg { width: 24px; height: 26px; margin-right: 13px; }
.side-tab.res { padding-left: 26px; }
.side-tab.res svg { width: 28px; height: 24px; margin-right: 11px; }
.outline { height: 625px; flex: none; display: flex; overflow: hidden; }
.modules { width: 479px; }
.module { border: 1px solid #ececef; border-radius: 10px; height: 582px; }
.module-head { height: 75px; padding: 1px 0 0 20px; display: flex; align-items: center; }
.ring { width: 20px; height: 20px; border: 1.5px solid #4a35d8; border-radius: 50%; flex: none; display: flex; align-items: center; justify-content: center; }
.ring svg { width: 12px; fill: none; stroke: #fff; stroke-width: 1.3; }
.ring.big { width: 30px; height: 30px; }
.module-title { margin-left: 15px; width: 359px; font-size: 19.500px; font-weight: 600; line-height: 26px; }
.pen-lg { width: 26px; height: 26px; fill: none; stroke: #18181b; stroke-width: 1.5; }
.caret { width: 14px; height: 9px; margin-left: 12px; fill: none; stroke: #18181b; stroke-width: 2.2; }
.lesson { height: 55px; margin-left: 50px; display: flex; align-items: center; padding-left: 15px; }
.lesson.on { background: #f0f0f2; }
.lesson-title { margin-left: 5px; width: 354px; font-size: 17.500px; line-height: 24px; }
.pen-sm { width: 16px; height: 16px; fill: none; stroke: #18181b; stroke-width: 1.6; }
.add-content { height: 44px; display: flex; align-items: center; padding-left: 200px; color: #4f46e5; font-size: 17.5px; }
.add-content svg { width: 15px; height: 15px; margin-right: 13px; stroke: currentColor; stroke-width: 1.5; }
.side-scroll { width: 19px; display: flex; flex-direction: column; align-items: center; padding: 7px 0 5px; }
.side-scroll svg { width: 12px; height: 9px; fill: #aaa; }
.side-scroll i { width: 11px; height: 302px; border-radius: 6px; background: #afafaf; margin-top: 7px; }
.side-scroll .down { margin-top: auto; }
.add-module { height: 75px; margin-top: auto; background: #4338ca; color: #fff; display: flex; align-items: center; padding-left: 187px; font-size: 17px; }
.add-module svg { width: 16px; height: 16px; margin-right: 12px; stroke: #fff; stroke-width: 1.5; }

/* Editor */
.editor { width: 1390px; height: 722px; margin: 15px 0 0 17px; background: #fff; border-radius: 12px; overflow: hidden; display: flex; flex-direction: column; }
.ed-title { height: 62px; flex: none; border-bottom: 2px solid #e3e3e5; display: flex; align-items: center; justify-content: space-between; padding: 0 25px 0 26px; font-size: 19.500px; }
.ed-title small { font-size: 17.500px; color: #98989d; }
.ed-top { height: 110px; flex: none; box-shadow: 0 2px 3px -1px rgba(34, 47, 62, .09), 0 8px 10px -6px rgba(34, 47, 62, .12); color: #222f3e; position: relative; z-index: 1; }
.menubar { height: 60px; padding: 0 0 1px 25px; display: flex; align-items: center; gap: 22px; font: 16.5px/24px var(--seg); }
.menu + .menu { margin-left: -0.9px; }
.toolbar { height: 40px; padding-left: 20px; display: flex; align-items: center; }
.tg { display: flex; gap: 14px; align-items: center; }
.tg.first { gap: 15px; }
.tg svg { width: 30px; height: 30px; fill: #222f3e; }
.tg :deep(.ln) { fill: none; stroke: #222f3e; stroke-width: 2; stroke-linecap: round; stroke-linejoin: round; }
.tg :deep(.th) { fill: none; stroke: #222f3e; stroke-width: 1.1; }
.select { width: 163px; height: 35px; margin: 0 37px; border-radius: 4px; background: #f7f7f7; display: flex; align-items: center; justify-content: space-between; padding: 0 9px 0 10px; font: 16.500px/24px var(--seg); }
.select span { padding-top: 3px; }
.select svg, .tg svg.chev { width: 12px; height: 12px; fill: #8d949c; }
.tg.left { margin-left: 43px; }
.tg.table { margin-left: 42px; gap: 4px; }
.tg.indent { margin-left: 43px; }
.tg.bullets { margin-left: 44px; gap: 12px; }
.tg.code { margin-left: 45px; }
.ed-area { flex: 1; min-height: 0; display: flex; overflow: hidden; font: 20px/28px "Liberation Sans", Arial, sans-serif; color: #2f3133; }
.doc { width: 1371px; padding: 21px 42px 0; flex: none; }
ul { list-style: none; margin: 0; padding: 0; }
li { height: 28px; margin-bottom: 30px; padding-left: 42px; position: relative; }
li::before { content: ""; position: absolute; left: 23px; top: 13px; width: 6px; height: 6px; border-radius: 50%; background: #2f3133; }
li:nth-child(2) { margin-bottom: 31px; }
li:last-child { margin-bottom: 0; }
.rule { height: 5px; background: #e7e7e7; margin-top: 29px; }
h2 { margin: 41.5px 0 27.5px; font-size: 37.500px; line-height: 45px; font-weight: 700; }
.sheet { border: 1px dashed #bbb; height: 300px; }
.tr { display: flex; width: 847px; height: 48.5px; border-top: 1px solid #ccc; }
.tr.th-row, .tr:nth-child(3) { height: 48px; }
.tr:nth-child(2), .tr:nth-child(4) { height: 49px; }
.tr:nth-child(odd):not(.th-row) { background: #f7f7f7; }
.td { border-left: 1px dashed #bbb; display: flex; align-items: center; }
.c1 { width: 147px; padding-left: 16.500px; font-weight: 700; }
.c2 { width: 530px; padding-left: 16px; }
.c3 { width: 170px; padding-left: 16px; border-right: 1px dashed #bbb; }
.th-row .td { justify-content: center; padding: 0 2px 1px 0; font-weight: 700; }
.tr:nth-child(3) .td { padding-bottom: 1px; }
code { background: #f7f7f7; border-radius: 4px; height: 30px; padding: 0 6.500px 0 7px; font: 16px/31px "DejaVu Sans Mono", monospace; letter-spacing: 0.45px; white-space: pre; margin-top: 2px; }
.comma { margin: 0 5px 0 .5px; }
.ed-scroll { width: 19px; background: #fbfbfb; display: flex; flex-direction: column; align-items: center; padding: 6px 0 5px; }
.ed-scroll svg { width: 13px; height: 10px; fill: #888; }
.ed-scroll i { width: 11px; height: 92px; border-radius: 6px; background: #8b8b8b; margin-top: 205px; }
.ed-scroll .down { margin-top: auto; }
.ed-foot { height: 31px; flex: none; border-top: 1px solid #e3e3e3; display: flex; align-items: center; padding: 4px 4px 0 1200px; color: #6b7480; font-weight: 400; }
.built { font: 16.5px/24px var(--seg); }
.tiny { width: 17px; height: 16px; margin: -4px 2px 0 6px; fill: #717b87; }
.tiny-name { font: 700 17px/22px "Noto Sans", sans-serif; color: #717b87; margin-top: -4px; }
.grip { width: 12px; height: 12px; margin: 5px 0 0 5px; stroke: #888; stroke-width: 1.5; }

/* Taskbar */
.taskbar { height: 60px; flex: none; background: #211f1f; border-top: 1px solid #3a3a3a; display: flex; align-items: center; font-family: var(--seg); color: #fff; padding-left: 24px; }
.weather { position: relative; display: flex; align-items: center; width: 396px; }
.w-badge { position: absolute; left: 15px; top: -3px; width: 20px; height: 20px; border-radius: 50%; background: #fb9aa0; color: #222; font-size: 13.500px; line-height: 20px; text-align: center; }
.w-text { margin-left: 8px; display: flex; flex-direction: column; align-items: flex-start; font-size: 14px; line-height: 20px; padding-bottom: 2px; }
.w2 { color: #d2d2d2; }
.win { width: 29px; height: 29px; }
.search { width: 275px; height: 40px; margin-left: 17px; border-radius: 20px; border: 1px solid #545252; background: #3c3a3a; display: flex; align-items: center; padding-left: 14px; font-size: 16px; color: #dcdcdc; flex: none; }
.mag { width: 19px; height: 19px; fill: none; stroke: #e8e8e8; stroke-width: 2; margin-right: 12px; }
.city { width: 58px; height: 30px; margin-left: auto; margin-right: 9px; }
.apps { display: flex; margin-left: 5px; padding-bottom: 2px; }
.app { width: 50px; margin-left: 5px; height: 50px; display: flex; align-items: center; justify-content: center; border-radius: 6px; position: relative; }
.app:first-child { margin-left: 0; }
.app.active { background: #343232; border: 1px solid #403e3e; }
.orb { position: absolute; left: 26px; top: 3px; width: 22px; height: 22px; }
.dot { position: absolute; left: 21px; bottom: 1px; width: 8px; height: 4px; border-radius: 2px; background: #8d8d8d; }
.app.active .dot { left: 14px; width: 20px; background: #a7a7a7; bottom: 0; }
.tray-up { width: 14px; height: 9px; margin-left: 115px; fill: none; stroke: #fff; stroke-width: 1.7; }
.lang { width: 30px; margin-left: 26px; display: flex; flex-direction: column; align-items: center; font-size: 14px; line-height: 19px; letter-spacing: -0.2px; padding-bottom: 2px; }
.wifi { width: 20px; height: 16px; margin-left: 22px; }
.vol { width: 20px; height: 16px; margin-left: 10px; }
.bat-ic { width: 20px; height: 18px; margin-left: 10px; margin-top: -4px; }
.wifi, .vol, .bat-ic { fill: none; stroke: #fff; stroke-width: 1.5; }
.clock { margin-left: auto; margin-right: 24px; display: flex; flex-direction: column; align-items: flex-end; font-size: 14px; line-height: 20px; padding-bottom: 2px; }
</style>
